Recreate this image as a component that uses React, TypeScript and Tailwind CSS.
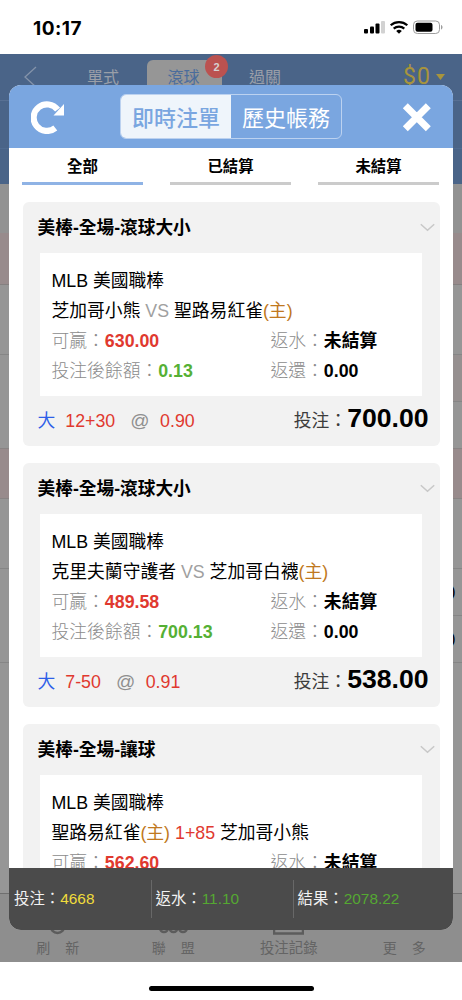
import { ReactNode } from 'react'

interface Bet {
  title: string
  match: ReactNode
  win: string
  balance?: string
  line?: string
  odds?: string
  stake?: string
}

const Home = () => <span className="text-[#c07820]">(主)</span>
const Versus = () => <span className="text-[#a0a0a0]"> VS </span>

const bets: Bet[] = [
  {
    title: '美棒-全場-滾球大小',
    match: <>芝加哥小熊<Versus />聖路易紅雀<Home /></>,
    win: '630.00',
    balance: '0.13',
    line: '12+30',
    odds: '0.90',
    stake: '700.00',
  },
  {
    title: '美棒-全場-滾球大小',
    match: <>克里夫蘭守護者<Versus />芝加哥白襪<Home /></>,
    win: '489.58',
    balance: '700.13',
    line: '7-50',
    odds: '0.91',
    stake: '538.00',
  },
  {
    title: '美棒-全場-讓球',
    match: <>聖路易紅雀<Home /> <span className="text-[#e0392f]">1+85</span> 芝加哥小熊</>,
    win: '562.60',
  },
]

function StatusBar() {
  return (
    <div className="flex h-[54px] shrink-0 items-center justify-between pl-[33px] pr-[19px]">
      <span className="mt-[2px] font-['Inter'] text-[19px] font-bold leading-none tracking-[0.5px]">10:17</span>
      <svg width="80" height="16" viewBox="0 0 80 16">
        <rect x="1" y="10" width="4" height="4.5" rx="1" />
        <rect x="7" y="7.5" width="4" height="7" rx="1" />
        <rect x="12.5" y="4.5" width="4" height="10" rx="1" />
        <rect x="18" y="2" width="4" height="12.5" rx="1" fill="#d2d2d2" />
        <g fill="none" stroke="#000" strokeWidth="2.2">
          <path d="M27.7 6.300a12.4 12.4 0 0 1 16.6 0" />
          <path d="M30.7 9.600a7.9 7.9 0 0 1 10.6 0" />
        </g>
        <path d="M33.2 12a4.2 4.2 0 0 1 5.6 0L36 14.8z" />
        <rect x="50.5" y="2" width="26" height="12.5" rx="3.8" fill="none" stroke="#9d9d9d" />
        <rect x="52.5" y="3.8" width="17" height="9" rx="2" />
        <path d="M78 6c2 .7 2 3.8 0 4.5z" fill="#9d9d9d" />
      </svg>
    </div>
  )
}

// Page that lies dimmed under the dialog
function Background() {
  return (
    <div className="flex h-[908px] shrink-0 flex-col overflow-hidden bg-[#969696]">
      <div className="h-[130px] shrink-0 bg-[#4a6488]">
        <div className="flex h-[47px] items-start border-b border-[#587093] text-[16px] leading-[22px] text-[#9a9fa8]">
          <svg className="ml-[23px] mt-[10px]" width="15" height="26" viewBox="0 0 15 26" fill="none" stroke="#8493aa" strokeWidth="1.3">
            <path d="M13 3 2 13l11 10" />
          </svg>
          <span className="ml-[49px] mt-[13px]">單式</span>
          <div className="relative ml-[28px] mt-[6px] h-10 w-[75px] rounded-md bg-[#969696] pt-[7px] text-center text-[#4a6c9c]">
            <span className="relative -left-px">滾球</span>
            <span className="absolute -right-[6px] -top-[5px] flex size-[23px] items-center justify-center rounded-full bg-[#bb5250] text-[11px] font-bold text-[#d6d0d0]">
              2
            </span>
          </div>
          <span className="ml-[27px] mt-[13px]">過關</span>
          <span className="ml-[122px] mt-[12px] font-['Roboto'] text-[23px] tracking-[1px] text-[#a8943c]">$0</span>
          <svg className="ml-[5px] mt-[20px]" width="9" height="6" viewBox="0 0 9 6" fill="#a8943c">
            <path d="M0 0h9L4.500 6z" />
          </svg>
        </div>
        <div className="h-[48px] border-b border-[#506b90]" />
      </div>
      <div className="h-[49px] shrink-0 bg-[#929292]" />
      <div className="h-[52px] shrink-0 border-b border-[#858080] bg-[#988b8c]" />
      <div className="h-[70px] shrink-0 border-b border-[#868686]" />
      <div className="flex h-[93px] shrink-0 justify-end">
        <div className="h-[47px] w-10 border-b border-[#868686] bg-[#969090]" />
      </div>
      <div className="h-[51px] shrink-0 border-y border-[#898484] bg-[#988b8c]" />
      <div className="h-[70px] shrink-0 border-b border-[#868686]" />
      <div className="flex h-[94px] shrink-0 justify-end border-b border-[#868686] text-[17px] leading-[46px] text-black">
        <div className="w-[12px]">
          <div className="h-[47px] border-b border-[#868686]">)</div>
          <div>)</div>
        </div>
      </div>
      <div className="flex-1" />
      <div className="flex h-[69px] shrink-0 border-t border-[#6f6f6f] bg-[#8e8e8e] text-[14px] leading-5 text-[#646464]">
        <NavItem label="刷 新" icon={<circle cx="15.500" cy="14" r="7" />} />
        <NavItem
          label="聯 盟"
          icon={
            <>
              <circle cx="6" cy="16" r="4" />
              <circle cx="15.500" cy="16" r="4" />
              <circle cx="25" cy="16" r="4" />
            </>
          }
        />
        <NavItem label="投注記錄" icon={<path d="M1 3h29v18.500H1z" />} />
        <NavItem label="更 多" icon={<path d="M4 8h20M4 14h20" />} />
      </div>
    </div>
  )
}

function NavItem({ label, icon }: { label: string; icon: ReactNode }) {
  return (
    <div className="flex flex-1 flex-col items-center pt-[18px]">
      <svg width="31" height="26" viewBox="0 0 31 26" fill="none" stroke="#5c5c5c" strokeWidth="2.500">
        {icon}
      </svg>
      <span className={label.length > 3 ? 'text-[14.4px]' : '[word-spacing:11px]'}>{label}</span>
    </div>
  )
}

function BetCard({ bet }: { bet: Bet }) {
  return (
    <div className="h-[244px] shrink-0 rounded-md bg-[#f2f2f2]">
      <div className="flex h-[51px] items-center justify-between pl-[14.500px] pr-[5px]">
        <span className="pt-px text-[17.7px] font-bold">{bet.title}</span>
        <svg width="15" height="9" viewBox="0 0 15 9" fill="none" stroke="#c8c8c8" strokeWidth="1.5">
          <path d="m.8 1.200 6.700 6 6.700-6" />
        </svg>
      </div>
      <div className="ml-[17px] mr-[18px] h-[143px] bg-white pl-[11.500px] pt-[12.600px] leading-[30.2px]">
        <div>MLB 美國職棒</div>
        <div>{bet.match}</div>
        <div className="flex">
          <div className="w-[219px]">
            <Label>可贏：</Label>
            <b className="text-[#e0392f]">{bet.win}</b>
          </div>
          <Label>返水：</Label>
          <b>未結算</b>
        </div>
        {bet.balance && (
          <div className="flex">
            <div className="w-[219px]">
              <Label>投注後餘額：</Label>
              <b className="text-[#55b035]">{bet.balance}</b>
            </div>
            <Label>返還：</Label>
            <b>0.00</b>
          </div>
        )}
      </div>
      {bet.stake && (
        <div className="flex h-[50px] items-center pl-[14.500px] pr-[11.500px]">
          <span className="text-[#2e5fe8]">大</span>
          <span className="ml-[10px] text-[#e0392f]">{bet.line}</span>
          <span className="ml-[15px] text-[19px] text-[#8f8f8f]">@</span>
          <span className="ml-[10.500px] text-[#e0392f]">{bet.odds}</span>
          <div className="mb-[5px] ml-auto flex items-baseline">
            <span className="text-[#3c3c3c]">投注：</span>
            <b className="text-[26.6px]">{bet.stake}</b>
          </div>
        </div>
      )}
    </div>
  )
}

function Label({ children }: { children: ReactNode }) {
  return <span className="font-light text-[#8c8c8c]">{children}</span>
}

function Tab({ label, active }: { label: string; active?: boolean }) {
  return (
    <div
      className={`h-[37px] w-[121px] border-b-[3px] pt-[6px] text-center text-[15.4px] font-bold leading-[26px] ${
        active ? 'border-[#8fb3e5]' : 'border-[#cbcbcb]'
      }`}
    >
      {label}
    </div>
  )
}

function Total({ label, value, color, divider }: { label: string; value: string; color: string; divider?: boolean }) {
  return (
    <div className={`flex h-[38px] w-[142px] items-center ${divider ? 'border-l border-[#686868] pl-[3.500px]' : 'pl-[5px]'}`}>
      {label}：<span className={color}>{value}</span>
    </div>
  )
}

function BetDialog() {
  return (
    <div className="absolute left-[9px] top-[85px] flex h-[845px] w-[444px] flex-col overflow-hidden rounded-xl bg-white">
      <div className="flex h-[63px] shrink-0 items-center bg-[#7aa6e0] pl-[22px]">
        <svg width="36" height="34" viewBox="0 0 36 34">
          <path d="M24.300 28A13.300 13.300 0 1 1 26.600 9.700" fill="none" stroke="#fff" strokeWidth="6.200" />
          <path d="M33 4v11.500H22.500z" fill="#fff" />
        </svg>
        <div className="ml-[53px] flex h-[45px] w-[222px] overflow-hidden rounded-md border border-[#bcd2f0] text-[22px] leading-[47px]">
          <div className="flex-1 bg-[#eff5fb] text-center font-medium text-[#7aa6e0]">即時注單</div>
          <div className="flex-1 text-center text-white">歷史帳務</div>
        </div>
        <svg className="ml-[57px]" width="36" height="34" viewBox="0 0 36 34" stroke="#fff" strokeWidth="7">
          <path d="m6.300 5.800 23 23M29.300 5.800l-23 23" />
        </svg>
      </div>
      <div className="flex gap-[27px] pl-[13px]">
        <Tab label="全部" active />
        <Tab label="已結算" />
        <Tab label="未結算" />
      </div>
      <div className="flex min-h-0 flex-1 flex-col gap-[17px] overflow-hidden pl-[14px] pr-[13px] pt-[17px] text-[17.8px]">
        {bets.map((bet) => (
          <BetCard key={bet.win} bet={bet} />
        ))}
      </div>
      <div className="flex h-[62px] shrink-0 items-center bg-[#4b4b4b] text-[15.4px] text-[#f2f2f2]">
        <Total label="投注" value="4668" color="text-[#f0dc3c]" />
        <Total label="返水" value="11.10" color="text-[#55a832]" divider />
        <Total label="結果" value="2078.22" color="text-[#55a832]" divider />
      </div>
    </div>
  )
}

export default function App() {
  return (
    <div className="relative flex h-[1000px] w-[462px] flex-col overflow-hidden bg-white font-['Liberation_Sans','Noto_Sans_CJK_TC',sans-serif] text-black">
      <StatusBar />
      <Background />
      <div className="flex flex-1 items-end justify-center pb-[9px]">
        <div className="h-[5px] w-[165px] rounded-full bg-black" />
      </div>
      <BetDialog />
    </div>
  )
}
